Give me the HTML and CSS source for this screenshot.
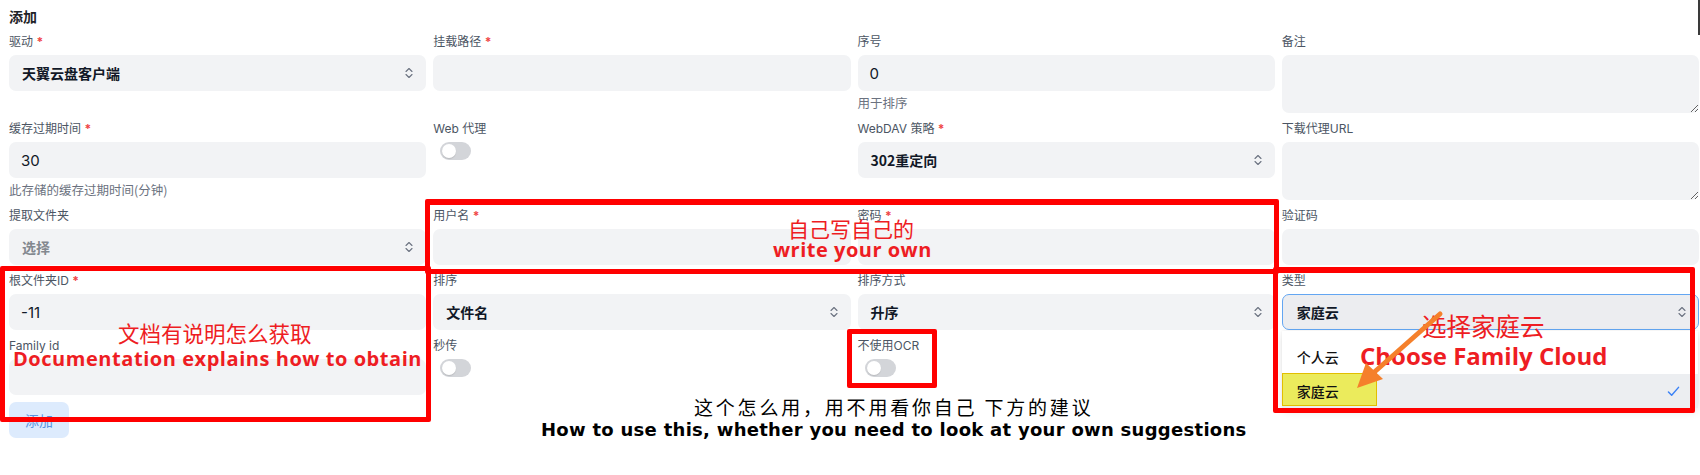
FILE: index.html
```html
<!DOCTYPE html>
<html lang="zh-CN">
<head>
<meta charset="utf-8">
<title>添加</title>
<link rel="stylesheet" href="styles.css">
</head>
<body>
<div class="page">
  <div class="title">添加</div>
  <div class="form">
    <!-- row 1 -->
    <div class="field">
      <div class="label">驱动 <span class="req">*</span></div>
      <div class="select"><span class="sval">天翼云盘客户端</span><svg class="chev" viewBox="0 0 8 12" width="8" height="12"><path d="M1 4.5 L4 1.5 L7 4.5 M1 7.5 L4 10.5 L7 7.5"/></svg></div>
    </div>
    <div class="field">
      <div class="label">挂载路径 <span class="req">*</span></div>
      <div class="input"></div>
    </div>
    <div class="field">
      <div class="label">序号</div>
      <div class="input"><span class="ival">0</span></div>
      <div class="help">用于排序</div>
    </div>
    <div class="field">
      <div class="label">备注</div>
      <textarea class="textarea"></textarea>
    </div>
    <!-- row 2 -->
    <div class="field">
      <div class="label">缓存过期时间 <span class="req">*</span></div>
      <div class="input"><span class="ival">30</span></div>
      <div class="help">此存储的缓存过期时间(分钟)</div>
    </div>
    <div class="field">
      <div class="label">Web 代理</div>
      <div class="toggle"><span class="knob"></span></div>
    </div>
    <div class="field">
      <div class="label">WebDAV 策略 <span class="req">*</span></div>
      <div class="select"><span class="sval">302重定向</span><svg class="chev" viewBox="0 0 8 12" width="8" height="12"><path d="M1 4.5 L4 1.5 L7 4.5 M1 7.5 L4 10.5 L7 7.5"/></svg></div>
    </div>
    <div class="field">
      <div class="label">下载代理URL</div>
      <textarea class="textarea"></textarea>
    </div>
    <!-- row 3 -->
    <div class="field">
      <div class="label">提取文件夹</div>
      <div class="select"><span class="sval placeholder">选择</span><svg class="chev" viewBox="0 0 8 12" width="8" height="12"><path d="M1 4.5 L4 1.5 L7 4.5 M1 7.5 L4 10.5 L7 7.5"/></svg></div>
    </div>
    <div class="field">
      <div class="label">用户名 <span class="req">*</span></div>
      <div class="input"></div>
    </div>
    <div class="field">
      <div class="label">密码 <span class="req">*</span></div>
      <div class="input"></div>
    </div>
    <div class="field">
      <div class="label">验证码</div>
      <div class="input"></div>
    </div>
    <!-- row 4 -->
    <div class="field">
      <div class="label">根文件夹ID <span class="req">*</span></div>
      <div class="input"><span class="ival">-11</span></div>
    </div>
    <div class="field">
      <div class="label">排序</div>
      <div class="select"><span class="sval">文件名</span><svg class="chev" viewBox="0 0 8 12" width="8" height="12"><path d="M1 4.5 L4 1.5 L7 4.5 M1 7.5 L4 10.5 L7 7.5"/></svg></div>
    </div>
    <div class="field">
      <div class="label">排序方式</div>
      <div class="select"><span class="sval">升序</span><svg class="chev" viewBox="0 0 8 12" width="8" height="12"><path d="M1 4.5 L4 1.5 L7 4.5 M1 7.5 L4 10.5 L7 7.5"/></svg></div>
    </div>
    <div class="field">
      <div class="label">类型</div>
      <div class="select-wrap">
        <div class="select focused"><span class="sval">家庭云</span><svg class="chev" viewBox="0 0 8 12" width="8" height="12"><path d="M1 4.5 L4 1.5 L7 4.5 M1 7.5 L4 10.5 L7 7.5"/></svg></div>
        <div class="menu">
          <div class="opt"><span class="otext">个人云</span></div>
          <div class="opt selected"><span class="hl"></span><span class="otext">家庭云</span><svg class="check" viewBox="0 0 14 12" width="13" height="11"><path d="M1.5 6.5 L5 10 L12.5 1.5"/></svg></div>
        </div>
      </div>
    </div>
    <!-- row 5 -->
    <div class="field">
      <div class="label">Family id</div>
      <div class="input"></div>
    </div>
    <div class="field">
      <div class="label">秒传</div>
      <div class="toggle"><span class="knob"></span></div>
    </div>
    <div class="field">
      <div class="label">不使用OCR</div>
      <div class="toggle"><span class="knob"></span></div>
    </div>
  </div>
  <div class="actions"><button class="btn">添加</button></div>

  <div class="annot">
    <div class="box b1"></div>
    <div class="box b2"></div>
    <div class="box b3"></div>
    <div class="box b4"></div>
    <div class="note zh t1">自己写自己的</div>
    <div class="note en t2">write your own</div>
    <div class="note zh t3">文档有说明怎么获取</div>
    <div class="note en t4">Documentation explains how to obtain</div>
    <div class="note zh t5">选择家庭云</div>
    <div class="note en t6">Choose Family Cloud</div>
    <div class="note zh dark t7">这个怎么用，用不用看你自己 下方的建议</div>
    <div class="note dark t8">How to use this, whether you need to look at your own suggestions</div>
    <svg class="arrow" viewBox="0 0 1700 475" width="1700" height="475">
      <line x1="1440" y1="314" x2="1371" y2="375"/>
      <polygon points="1357,388 1366,363 1383,379"/>
    </svg>
    <div class="scroll-mark"></div>
  </div>
</div>
</body>
</html>
```

FILE: styles.css
```css
* { box-sizing: border-box; }

html, body {
  margin: 0;
  padding: 0;
  background: #ffffff;
}

body {
  font-family: Inter, "Noto Sans", "Noto Sans CJK SC", sans-serif;
  color: #1f2937;
  width: 1700px;
  height: 475px;
  overflow: hidden;
}

.page {
  position: relative;
  width: 1700px;
  height: 475px;
  padding: 0 1px 0 9px;
}

.title {
  font-size: 14px;
  font-weight: 700;
  line-height: 20px;
  padding-top: 6px;
  margin-bottom: 6px;
  color: #1f2328;
  font-family: "Noto Sans CJK SC", sans-serif;
}

.form {
  display: grid;
  grid-template-columns: repeat(4, 1fr);
  column-gap: 7px;
  row-gap: 6px;
  align-items: start;
}

.field {
  display: flex;
  flex-direction: column;
  min-width: 0;
}

.label {
  font-size: 12px;
  line-height: 20px;
  height: 20px;
  margin-bottom: 3px;
  color: #4b5563;
  font-family: Inter, "Noto Sans CJK SC", sans-serif;
}

.req {
  color: #ef4444;
  font-weight: 700;
}

.input, .select {
  height: 36px;
  background: #f2f3f5;
  border-radius: 7px;
  display: flex;
  align-items: center;
  padding: 0 13px 0 12px;
}

.ival {
  font-size: 15px;
  color: #111827;
  font-family: Inter, "Noto Sans CJK SC", sans-serif;
}

.select {
  justify-content: space-between;
  padding-left: 13px;
}

.sval {
  font-size: 14px;
  font-weight: 700;
  color: #111827;
  font-family: "Noto Sans CJK SC", sans-serif;
}

.sval.placeholder {
  color: #83888f;
}

.chev {
  flex: none;
}

.chev path {
  fill: none;
  stroke: #6b7280;
  stroke-width: 1.1;
  stroke-linecap: round;
  stroke-linejoin: round;
}

.select.focused {
  background: #ecedf0;
  border: 1px solid #63a6f2;
  padding-left: 14px;
  padding-right: 12px;
}

.textarea {
  display: block;
  width: 100%;
  height: 58px;
  border: none;
  border-radius: 7px;
  background: #f2f3f5;
  resize: vertical;
  font: inherit;
  margin: 0;
  padding: 8px 12px;
}

.help {
  margin-top: 2px;
  font-size: 12.5px;
  line-height: 20px;
  color: #6b7280;
  font-family: "Noto Sans CJK SC", sans-serif;
}

.toggle {
  position: relative;
  width: 31px;
  height: 18px;
  margin-left: 7px;
  border-radius: 9px;
  background: #d3d5d9;
}

.knob {
  position: absolute;
  left: 2px;
  top: 2px;
  width: 14px;
  height: 14px;
  border-radius: 50%;
  background: #ffffff;
  box-shadow: 0 1px 1px rgba(0,0,0,0.12);
}

.select-wrap {
  position: relative;
}

.menu {
  position: absolute;
  left: 0;
  right: 1px;
  top: 100%;
  margin-top: 1px;
  padding-top: 9px;
  background: #ffffff;
  box-shadow: 0 4px 10px rgba(0,0,0,0.10), 0 0 2px rgba(0,0,0,0.08);
  border-radius: 0 0 6px 6px;
  z-index: 5;
}

.opt {
  position: relative;
  height: 34px;
  display: flex;
  align-items: center;
  justify-content: space-between;
  padding: 0 18px 0 15px;
}

.opt.selected {
  background: #eceef1;
}

.otext {
  position: relative;
  z-index: 1;
  font-size: 14px;
  font-weight: 500;
  color: #111;
  font-family: "Noto Sans CJK SC", sans-serif;
}

.hl {
  position: absolute;
  left: 0;
  top: -1px;
  width: 95px;
  height: 33px;
  background: #ebeb5c;
  border: 1.5px solid #e2bf00;
  z-index: 0;
}

.check path {
  fill: none;
  stroke: #3b82f6;
  stroke-width: 1.6;
  stroke-linecap: round;
  stroke-linejoin: round;
}

.actions {
  margin-top: 7px;
}

.btn {
  width: 60px;
  height: 36px;
  border: none;
  border-radius: 7px;
  background: #ddebfd;
  color: #5b94e0;
  font-size: 14px;
  font-family: "Noto Sans CJK SC", sans-serif;
  padding: 0;
}

/* annotations layered over the screenshot */
.annot {
  position: absolute;
  inset: 0;
  pointer-events: none;
  z-index: 10;
}

.box {
  position: absolute;
  border: 5px solid #ff0000;
  border-radius: 2px;
}

.b1 { left: 425px; top: 199px; width: 854px; height: 75px; border-width: 6px 5px 5px 5px; }
.b2 { left: 0; top: 266px; width: 431px; height: 156px; }
.b3 { left: 847px; top: 329px; width: 90px; height: 59px; }
.b4 { left: 1273px; top: 267px; width: 422px; height: 146px; border-width: 6px 5px 5px 5px; }

.note {
  position: absolute;
  white-space: nowrap;
  color: #ee1d23;
}

.note.zh {
  font-family: "Noto Sans CJK SC", sans-serif;
  font-weight: 400;
}

.note.en {
  font-family: "Open Sans", "Noto Sans", sans-serif;
  font-weight: 700;
}

.note.dark { color: #000000; }

.t1 { left: 788px; top: 216px; font-size: 21px; line-height: 24px; }
.t2 { left: 773px; top: 236px; font-size: 20px; line-height: 28px; letter-spacing: 0.5px; }
.t3 { left: 118px; top: 321px; font-size: 21.5px; line-height: 24px; }
.t4 { left: 13px; top: 345px; font-size: 20px; line-height: 28px; letter-spacing: 0.55px; }
.t5 { left: 1422px; top: 312px; font-size: 24.5px; line-height: 28px; }
.t6 { left: 1360px; top: 341px; font-size: 24px; line-height: 30px; }
.t7 { left: 694px; top: 394px; font-size: 19px; line-height: 26px; letter-spacing: 2.8px; }
.t8 {
  left: 541px;
  top: 418px;
  font-family: "DejaVu Sans", sans-serif;
  font-weight: 700;
  font-size: 18px;
  line-height: 24px;
  letter-spacing: 0.28px;
}

.arrow {
  position: absolute;
  left: 0;
  top: 0;
}

.arrow line {
  stroke: #f5802b;
  stroke-width: 5;
  stroke-linecap: round;
}

.arrow polygon {
  fill: #f5802b;
}

.scroll-mark {
  position: absolute;
  right: 0;
  top: 0;
  width: 2px;
  height: 35px;
  background: #3a3a3a;
}
```
